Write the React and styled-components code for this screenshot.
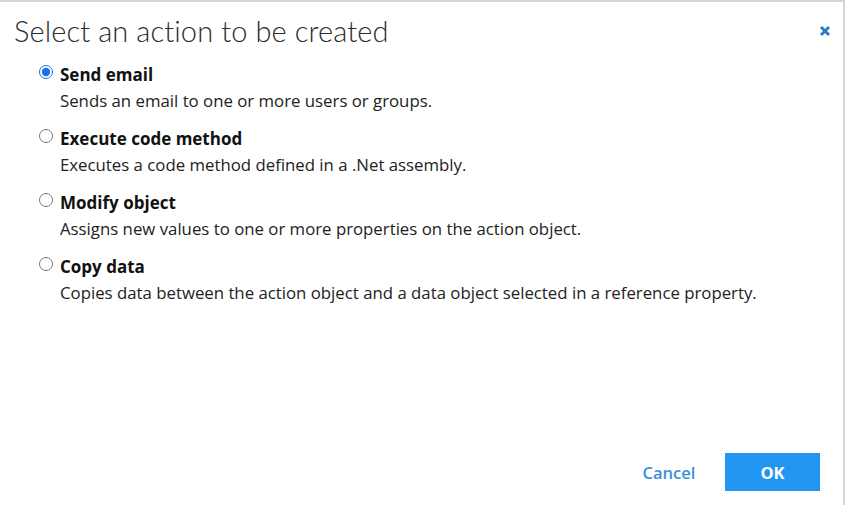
import React, { useState } from "react";
import styled, { createGlobalStyle } from "styled-components";

const Global = createGlobalStyle`
  html, body { margin: 0; padding: 0; background: #fff; }
  body { font-family: "Open Sans", "Noto Sans", sans-serif; color: #222; }
`;

const Dialog = styled.div`
  box-sizing: border-box;
  width: 845px;
  height: 505px;
  border-top: 2px solid #d4d4d4;
  border-right: 2px solid #d4d4d4;
  display: flex;
  flex-direction: column;
  background: #fff;
`;

const Header = styled.div`
  display: flex;
  justify-content: space-between;
  align-items: center;
  padding: 12px 10px 0 14px;
`;

const Title = styled.h1`
  margin: 0;
  font-family: "Lato", "Noto Sans", sans-serif;
  font-weight: 300;
  font-size: 29px;
  letter-spacing: 0.1px;
  color: #2b2b2b;
  line-height: 34px;
`;

const Close = styled.button`
  border: none;
  background: none;
  padding: 0;
  width: 14px;
  height: 14px;
  margin-top: 2px;
  cursor: pointer;
  display: flex;
`;

const Options = styled.div`
  display: flex;
  flex-direction: column;
  gap: 12px;
  padding: 14px 0 0 38px;
  flex: 1;
`;

const Option = styled.label`
  display: grid;
  grid-template-columns: 22px 1fr;
  cursor: pointer;
`;

const Radio = styled.input`
  margin: 3px 0 0 1px;
  width: 14px;
  height: 14px;
  accent-color: #1a73e8;
`;

const Name = styled.div`
  font-weight: 700;
  font-size: 17px;
  line-height: 26px;
  color: #111;
`;

const Desc = styled.div`
  grid-column: 2;
  font-size: 16.8px;
  line-height: 26px;
  color: #222;
`;

const Footer = styled.div`
  display: flex;
  justify-content: flex-end;
  align-items: center;
  gap: 28px;
  padding: 0 23px 14px 0;
`;

const TextButton = styled.button`
  border: none;
  background: none;
  font-family: "Open Sans", sans-serif;
  font-weight: 600;
  font-size: 16.5px;
  color: #3b8fdd;
  padding: 0;
  width: 56px;
  cursor: pointer;
`;

const Primary = styled.button`
  border: none;
  background: #2196f3;
  color: #fff;
  font-family: "Open Sans", sans-serif;
  font-weight: 700;
  font-size: 16.5px;
  width: 95px;
  height: 38px;
  cursor: pointer;
`;

const actions = [
  { name: "Send email", desc: "Sends an email to one or more users or groups." },
  { name: "Execute code method", desc: "Executes a code method defined in a .Net assembly." },
  { name: "Modify object", desc: "Assigns new values to one or more properties on the action object." },
  { name: "Copy data", desc: "Copies data between the action object and a data object selected in a reference property." },
];

export default function App() {
  const [sel, setSel] = useState(0);
  return (
    <>
      <Global />
      <Dialog>
        <Header>
          <Title>Select an action to be created</Title>
          <Close aria-label="Close">
            <svg width="12" height="12" viewBox="0 0 12 12">
              <path d="M2 2 L10 10 M10 2 L2 10" stroke="#2b7bc4" strokeWidth="3" strokeLinecap="butt" />
            </svg>
          </Close>
        </Header>
        <Options>
          {actions.map((a, i) => (
            <Option key={a.name}>
              <Radio type="radio" name="action" checked={sel === i} onChange={() => setSel(i)} />
              <Name>{a.name}</Name>
              <Desc>{a.desc}</Desc>
            </Option>
          ))}
        </Options>
        <Footer>
          <TextButton>Cancel</TextButton>
          <Primary>OK</Primary>
        </Footer>
      </Dialog>
    </>
  );
}
